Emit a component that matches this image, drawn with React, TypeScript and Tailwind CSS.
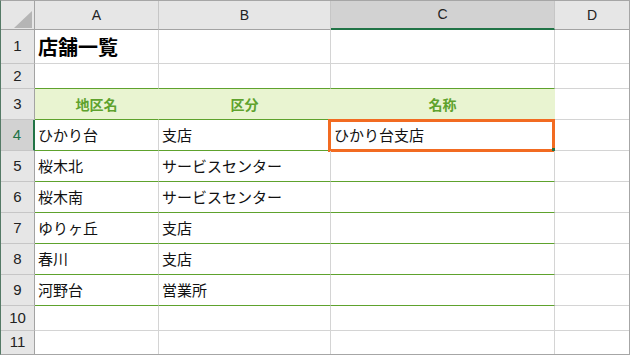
import React from 'react';

const cols = ['A', 'B', 'C', 'D'];

const rows: { h: string; cells: string[] }[] = [
  { h: '1', cells: ['店舗一覧', '', '', ''] },
  { h: '2', cells: ['', '', '', ''] },
  { h: '3', cells: ['地区名', '区分', '名称', ''] },
  { h: '4', cells: ['ひかり台', '支店', 'ひかり台支店', ''] },
  { h: '5', cells: ['桜木北', 'サービスセンター', '', ''] },
  { h: '6', cells: ['桜木南', 'サービスセンター', '', ''] },
  { h: '7', cells: ['ゆりヶ丘', '支店', '', ''] },
  { h: '8', cells: ['春川', '支店', '', ''] },
  { h: '9', cells: ['河野台', '営業所', '', ''] },
  { h: '10', cells: ['', '', '', ''] },
  { h: '11', cells: ['', '', '', ''] },
];

const jp = "font-['Noto_Sans_CJK_JP','Noto_Sans',sans-serif]";

function cellClass(r: number, c: number) {
  const last = r === rows.length - 1;
  const lastCol = c === 3;
  const inTable = c < 3;
  let cls = 'relative flex items-center px-[3px] whitespace-nowrap overflow-visible ';
  if (!lastCol) cls += 'border-r ';
  if (!last) cls += 'border-b ';

  // header row of the table (row 3)
  if (r === 2 && inTable) {
    return cls + 'bg-[#e9f4d1] border-r-transparent border-b-[#5ea22d] justify-center font-bold text-[#5ea22d] text-[14px]';
  }
  // body rows and the row above the header
  if ((r === 1 || (r >= 3 && r <= 8)) && inTable) {
    return cls + 'border-r-[#d4d4d4] border-b-[#5ea22d] text-[15px] text-[#111]';
  }
  return cls + 'border-r-[#d4d4d4] border-b-[#d4d4d4] text-[15px] text-[#111]';
}

export default function App() {
  return (
    <div className={`w-[630px] h-[355px] bg-white border border-[#a6a6a6] border-l-[#557a66] overflow-hidden ${jp}`}>
      <div className="grid grid-cols-[34px_124px_172px_224px_74px] grid-rows-[29px_34px_25px_31px_31px_31px_31px_31px_31px_31px_25px_23px]">
        {/* corner */}
        <div className="relative bg-[#e6e6e6] border-r border-b border-r-[#a3a3a3] border-b-[#a3a3a3]">
          <svg className="absolute left-[13px] top-[10px]" width="18" height="17" viewBox="0 0 18 17">
            <polygon points="18,0 18,17 0,17" fill="#b5b5b5" />
          </svg>
        </div>
        {cols.map((c, i) => (
          <div
            key={c}
            className={
              "flex items-center justify-center font-['Liberation_Sans',sans-serif] text-[14px] text-[#222] " +
              (i < 3 ? 'border-r border-r-[#c6c6c6] ' : '') +
              (c === 'C'
                ? 'bg-[#d2d2d2] border-b-2 border-b-[#217346] text-[#1f5c3c]'
                : 'bg-[#e6e6e6] border-b border-b-[#a3a3a3]')
            }
          >
            {c}
          </div>
        ))}

        {rows.map((row, r) => (
          <React.Fragment key={row.h}>
            <div
              className={
                "flex items-center justify-center font-['Liberation_Sans',sans-serif] text-[15px] " +
                (r < rows.length - 1 ? 'border-b border-b-[#c6c6c6] ' : '') +
                (r === 3
                  ? 'bg-[#d2d2d2] border-r-2 border-r-[#217346] text-[#217346]'
                  : 'bg-[#e6e6e6] border-r border-r-[#a3a3a3] text-[#222]')
              }
            >
              {row.h}
            </div>
            {row.cells.map((v, c) => (
              <div key={c} className={cellClass(r, c) + (r === 0 && c === 0 ? ' text-[20px] font-bold text-black' : '')}>
                {v}
                {r === 3 && c === 2 && (
                  <>
                    <div className="absolute left-[-3px] top-[-1px] w-[227px] h-[33px] border-[3px] border-[#f26b21]" />
                    <div className="absolute left-[221px] top-[28px] w-[3px] h-[3px] bg-[#217346]" />
                  </>
                )}
              </div>
            ))}
          </React.Fragment>
        ))}
      </div>
    </div>
  );
}
